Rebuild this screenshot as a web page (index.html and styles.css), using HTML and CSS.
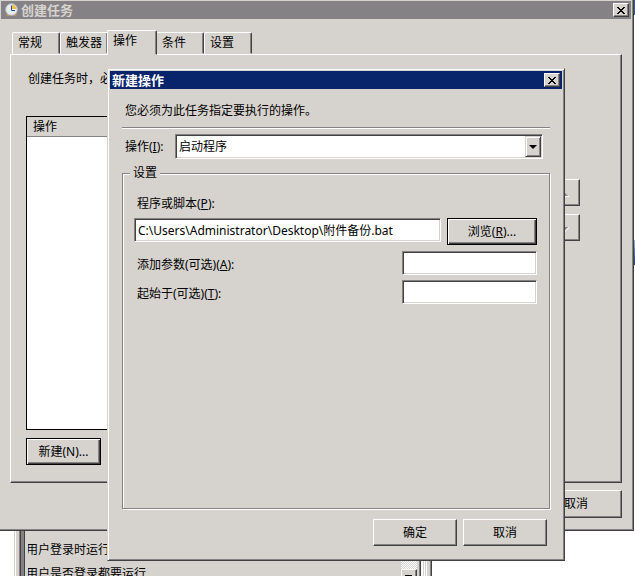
FILE: index.html
```html
<!DOCTYPE html>
<html lang="zh-CN">
<head>
    <meta charset="UTF-8">
    <meta name="viewport" content="width=device-width, initial-scale=1.0">
    <title>创建任务</title>
    <link rel="stylesheet" href="styles.css">
</head>
<body>
    <div class="desktop">
        <!-- 桌面右侧露出的窗口边缘 -->
        <div class="edge-strip"></div>

        <!-- 最底层的属性窗口 -->
        <div class="window-back">
            <div class="back-frame"></div>
            <div class="back-list">
                <p>用户登录时运行</p>
                <p>用户是否登录都要运行</p>
            </div>
            <div class="back-scroll">
                <span class="scroll-btn"></span>
            </div>
            <div class="back-edge"></div>
        </div>

        <!-- 创建任务 -->
        <section class="window window-task">
            <header class="title-bar inactive">
                <svg class="title-icon" viewBox="0 0 13 14">
                    <path d="M1 10h11l-1 3H9l-1-1H5l-1 1H2z" fill="#b9975b"/>
                    <circle cx="6.5" cy="6.5" r="5.8" fill="#e6ecf2" stroke="#b4bfca"/>
                    <path d="M7 6V1.5A5 5 0 0 1 11.5 6z" fill="#efc05a"/>
                    <path d="M6.5 2.5v5h3.500" fill="none" stroke="#33507c"/>
                </svg>
                <h1>创建任务</h1>
                <button class="close-btn" type="button" aria-label="关闭">
                    <svg viewBox="0 0 8 7"><path d="M0 0h2v1h1v1h2V1h1V0h2v1H7v1H6v1H5v1h1v1h1v1h1v1H6V6H5V5H3v1H2v1H0V6h1V5h1V4h1V3H2V2H1V1H0z"/></svg>
                </button>
            </header>
            <div class="task-body">
                <nav class="tabs">
                    <button class="tab" type="button">常规</button>
                    <button class="tab" type="button">触发器</button>
                    <button class="tab active" type="button">操作</button>
                    <button class="tab" type="button">条件</button>
                    <button class="tab" type="button">设置</button>
                </nav>
                <div class="tab-panel">
                    <p class="panel-text">创建任务时，必</p>
                    <div class="panel-row">
                        <div class="action-list">
                            <div class="list-head">操作</div>
                        </div>
                        <div class="order-btns">
                            <button class="btn" type="button" aria-label="上移" disabled>
                                <svg viewBox="0 0 9 5"><path d="M0 4l4-4 4 4z" fill="#848284"/><path d="M1 4h8v1H1z" fill="#fff"/></svg>
                            </button>
                            <button class="btn" type="button" aria-label="下移" disabled>
                                <svg viewBox="0 0 9 5"><path d="M0 0h8L4 4z" fill="#848284"/><path d="M9 0v1L5 5V4z" fill="#fff"/></svg>
                            </button>
                        </div>
                    </div>
                    <button class="btn btn-default btn-new" type="button">新建(N)...</button>
                </div>
                <div class="task-footer">
                    <button class="btn" type="button">取消</button>
                </div>
            </div>
        </section>

        <!-- 新建操作 -->
        <section class="window window-action">
            <header class="title-bar">
                <h2>新建操作</h2>
                <button class="close-btn" type="button" aria-label="关闭">
                    <svg viewBox="0 0 8 7"><path d="M0 0h2v1h1v1h2V1h1V0h2v1H7v1H6v1H5v1h1v1h1v1h1v1H6V6H5V5H3v1H2v1H0V6h1V5h1V4h1V3H2V2H1V1H0z"/></svg>
                </button>
            </header>
            <form class="action-form">
                <p class="intro">您必须为此任务指定要执行的操作。</p>
                <hr>
                <div class="type-row">
                    <label for="actionType">操作(<u>I</u>):</label>
                    <div class="select-box">
                        <select id="actionType">
                            <option>启动程序</option>
                        </select>
                        <span class="select-arrow"></span>
                    </div>
                </div>
                <fieldset>
                    <legend>设置</legend>
                    <label class="script-label" for="script">程序或脚本(<u>P</u>):</label>
                    <div class="script-row">
                        <input id="script" type="text" value="C:\Users\Administrator\Desktop\附件备份.bat">
                        <button class="btn btn-default" type="button">浏览(<u>R</u>)...</button>
                    </div>
                    <div class="field-row">
                        <label for="args">添加参数(可选)(<u>A</u>):</label>
                        <input id="args" type="text">
                    </div>
                    <div class="field-row">
                        <label for="startIn">起始于(可选)(<u>T</u>):</label>
                        <input id="startIn" type="text">
                    </div>
                </fieldset>
                <div class="form-footer">
                    <button class="btn" type="button">确定</button>
                    <button class="btn" type="button">取消</button>
                </div>
            </form>
        </section>
    </div>
</body>
</html>
```

FILE: styles.css
```css
/* 通用 */
* {
    margin: 0;
    padding: 0;
    box-sizing: border-box;
}

body {
    background-color: #fff;
}

body, button, input, select {
    font-family: "Noto Sans", "Noto Sans CJK SC", sans-serif;
    font-size: 12px;
    line-height: 16px;
    color: #000;
}

.desktop {
    position: relative;
    min-height: 100vh;
    overflow: hidden;
}

.edge-strip {
    position: absolute;
    top: 0;
    right: 0;
    width: 1px;
    height: 100%;
    background: linear-gradient(#2a5caa 0 15px, #fff 15px 240px, #8fb4ea 240px, #103a8c 265px, #fff 265px);
}

/* 窗口 */
.window {
    position: absolute;
    background-color: #d6d3ce;
    border: 1px solid;
    border-color: #d6d3ce #424142 #424142 #d6d3ce;
    box-shadow: inset 1px 1px #fff, inset -1px -1px #848284;
    padding: 2px;
    display: flex;
    flex-direction: column;
}

.title-bar {
    display: flex;
    align-items: center;
    height: 18px;
    padding: 0 2px;
    background-color: #08246b;
    color: #fff;
    flex: none;
}

.title-bar.inactive {
    background-color: #848284;
    color: #d6d3ce;
}

.title-bar h1, .title-bar h2 {
    flex: 1;
    font-size: 13px;
    font-weight: bold;
}

.title-icon {
    width: 13px;
    height: 14px;
    margin: 0 3px 0 2px;
}

.close-btn {
    display: flex;
    align-items: center;
    justify-content: center;
    width: 16px;
    height: 14px;
    background-color: #d6d3ce;
    border: 1px solid;
    border-color: #fff #424142 #424142 #fff;
    box-shadow: inset -1px -1px #848284;
}

.close-btn svg {
    width: 8px;
    height: 7px;
}

/* 按钮 */
.btn {
    width: 84px;
    height: 27px;
    background-color: #d6d3ce;
    border: 1px solid;
    border-color: #fff #424142 #424142 #fff;
    box-shadow: inset -1px -1px #848284;
}

.btn-default {
    border-color: #000;
    box-shadow: inset 1px 1px #fff, inset -1px -1px #424142, inset -2px -2px #848284;
}

/* 创建任务窗口 */
.window-task {
    top: -2px;
    left: -2px;
    right: 1px;
    height: 533px;
}

.task-body {
    flex: 1;
    display: flex;
    flex-direction: column;
    padding: 11px 9px 10px;
}

.tabs {
    display: flex;
    align-items: flex-end;
    height: 24px;
    padding-left: 2px;
}

.tab {
    width: 48px;
    height: 22px;
    padding: 0 5px;
    text-align: left;
    white-space: nowrap;
    background-color: #d6d3ce;
    border: 1px solid;
    border-color: #fff #424142 transparent #fff;
    border-radius: 2px 2px 0 0;
    box-shadow: inset -1px 0 #848284;
}

.tab.active {
    position: relative;
    width: 50px;
    height: 25px;
    margin: 0 -1px -1px;
    padding-bottom: 4px;
    border-bottom-color: #d6d3ce;
}

.tab-panel {
    flex: 1;
    display: flex;
    flex-direction: column;
    padding: 16px 41px 17px 15px;
    border: 1px solid;
    border-color: #fff #424142 #424142 #fff;
    box-shadow: inset -1px -1px #848284;
}

.panel-text {
    padding-left: 2px;
    white-space: nowrap;
}

.panel-row {
    flex: 1;
    display: flex;
    gap: 8px;
    margin: 29px 0 8px;
}

.action-list {
    flex: 1;
    background-color: #fff;
    border: 1px solid #000;
}

.list-head {
    height: 20px;
    padding: 2px 6px;
    background-color: #d6d3ce;
    border-bottom: 1px solid #848284;
}

.order-btns {
    display: flex;
    flex-direction: column;
    gap: 8px;
    padding-top: 63px;
}

.order-btns .btn {
    width: 32px;
}

.order-btns svg {
    width: 9px;
    height: 5px;
}

.btn-new {
    width: 75px;
    flex: none;
}

.task-footer {
    display: flex;
    justify-content: flex-end;
    padding-top: 7px;
}

.task-footer .btn {
    width: 92px;
    height: 28px;
}

/* 新建操作窗口 */
.window-action {
    top: 68px;
    left: 107px;
    right: 70px;
    height: 493px;
}

.action-form {
    flex: 1;
    display: flex;
    flex-direction: column;
    padding: 14px 12px 12px;
}

.intro {
    padding-left: 3px;
}

hr {
    margin-top: 8px;
    border: 0;
    border-top: 1px solid #848284;
    border-bottom: 1px solid #fff;
}

.type-row {
    display: flex;
    align-items: center;
    gap: 8px;
    padding: 5px 7px 6px 3px;
}

.type-row label {
    width: 42px;
}

input, .select-box {
    background-color: #fff;
    border: 1px solid;
    border-color: #848284 #fff #fff #848284;
    box-shadow: inset 1px 1px #424142, inset -1px -1px #d6d3ce;
    border-radius: 0;
    outline: none;
}

input {
    height: 24px;
    padding: 0 3px;
}

.select-box {
    position: relative;
    flex: 1;
    height: 25px;
}

select {
    width: 100%;
    height: 100%;
    padding: 0 20px 0 3px;
    appearance: none;
    background: none;
    border: 0;
    outline: none;
}

.select-arrow {
    position: absolute;
    top: 1px;
    right: 1px;
    bottom: 1px;
    width: 16px;
    display: flex;
    align-items: center;
    justify-content: center;
    background-color: #d6d3ce;
    border: 1px solid;
    border-color: #d6d3ce #424142 #424142 #d6d3ce;
    box-shadow: inset 1px 1px #fff, inset -1px -1px #848284;
    pointer-events: none;
}

.select-arrow::after {
    content: "";
    border: 4px solid transparent;
    border-top-color: #000;
    border-bottom: 0;
}

fieldset {
    flex: 1;
    min-width: 0;
    padding: 15px 12px 0 11px;
    border: 1px solid #848284;
    box-shadow: inset 1px 1px #fff, 1px 1px #fff;
}

legend {
    margin-left: -4px;
    padding: 0 3px;
    background-color: #d6d3ce;
}

.script-label {
    display: block;
    margin-bottom: 6px;
    padding-left: 3px;
}

.script-row {
    display: flex;
    gap: 6px;
    margin-bottom: 6px;
}

.script-row input {
    flex: 1;
    min-width: 0;
}

.script-row .btn {
    width: 90px;
}

.field-row {
    display: flex;
    justify-content: space-between;
    align-items: flex-end;
    margin-bottom: 5px;
    padding-left: 3px;
}

.field-row label {
    padding-bottom: 2px;
}

.field-row input {
    width: 135px;
}

.form-footer {
    display: flex;
    justify-content: flex-end;
    gap: 6px;
    padding: 10px 3px 0;
}

/* 底层窗口 */
.window-back {
    position: absolute;
    top: 500px;
    left: 14px;
    width: 418px;
    bottom: 0;
    display: flex;
    overflow: hidden;
    background-color: #d6d3ce;
    border-left: 1px solid #d6d3ce;
}

.back-frame {
    width: 10px;
    background: linear-gradient(to right, #fff 0 1px, #d6d3ce 1px 4px, #848284 4px 5px, #424142 5px 6px, #848284 6px 9px, #424142 9px);
}

.back-list {
    flex: 1;
    padding: 42px 0 0 3px;
    white-space: nowrap;
}

.back-list p {
    margin-bottom: 8px;
    text-indent: -2px;
    overflow: hidden;
}

.back-scroll {
    width: 16px;
    padding-top: 69px;
    background: repeating-conic-gradient(#fff 0 25%, #d6d3ce 0 50%) 0 0 / 2px 2px;
}

.scroll-btn {
    display: block;
    height: 16px;
    background: linear-gradient(#000, #000) 3px 5px / 7px 2px no-repeat #d6d3ce;
    border: 1px solid;
    border-color: #fff #424142 #424142 #fff;
    box-shadow: inset -1px -1px #848284;
}

.back-edge {
    width: 15px;
    background: linear-gradient(to right, #d6d3ce 0 2px, #848284 2px 3px, #424142 3px 4px, #fff 4px 6px, #d6d3ce 6px 7px, #fff 7px 8px, #d6d3ce 8px 9px, #fff 9px 10px, #d6d3ce 10px 13px, #848284 13px 14px, #424142 14px);
}
```
